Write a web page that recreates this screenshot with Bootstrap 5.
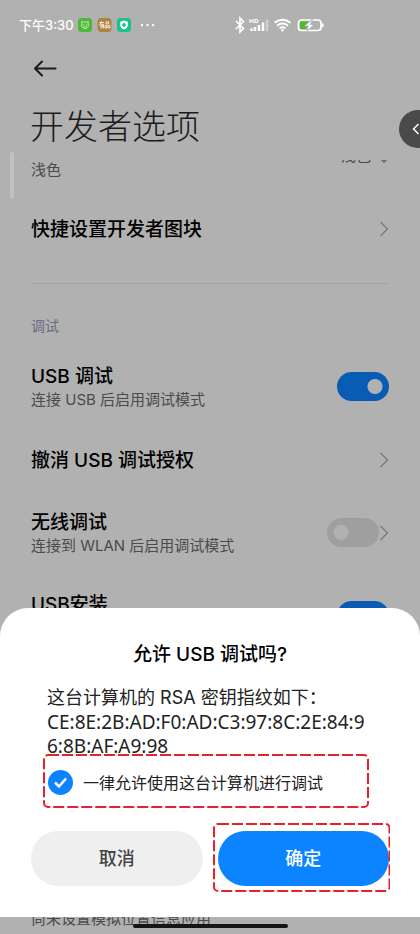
<!DOCTYPE html>
<html lang="zh-CN">
<head>
<meta charset="utf-8">
<meta name="viewport" content="width=device-width, initial-scale=1">
<title>开发者选项</title>
<link href="https://cdn.jsdelivr.net/npm/bootstrap@5.3.0/dist/css/bootstrap.min.css" rel="stylesheet">
<style>
  body { background: #b1b1b1; color: #000; font-family: Inter, "Noto Sans CJK SC", sans-serif; }
  .screen { isolation: isolate; }
  .status-bar { height: 50px; padding: 0 19px; color: #fff; font-size: 13px; font-weight: 500; line-height: 20px; }
  .status-bar svg, .icon { display: block; flex: none; }
  .status-left { width: 215px; gap: 5px; }
  .status-left span { margin-right: -1px; }
  .back-btn { width: 28px; height: 20px; margin: 8px 0 0 31px; }
  .page-title { margin: 24px 30px 0; font-size: 34px; font-weight: 300; line-height: 50px; color: #1c1c1c; padding-bottom: 8px; }
  .settings { padding: 0 31px; }
  .row-item { min-height: 73px; }
  .row-tall { min-height: 92px; }
  .row-title { padding-top: 2px; font-size: 19px; font-weight: 500; line-height: 24px; }
  .row-note { font-size: 15px; line-height: 22px; color: #4b4b4b; }
  .theme-row { height: 32px; line-height: 20px; }
  .theme-value { margin-top: -14px; }
  .divider { margin-top: 18px; border-top: 1px solid #a4a4a4; }
  .section-name { margin: 31px 0 13px; font-size: 14px; font-weight: 400; line-height: 22px; color: #6a6c82; }
  .toggle.form-check-input { width: 52px; height: 29px; margin: 0; border: 0; border-radius: 15px; background: #9f9f9f radial-gradient(circle at 14px 50%, #b1b1b1 7px, transparent 8px); }
  .toggle.form-check-input:checked { background: #085cb3 radial-gradient(circle at 38px 50%, #b1b1b1 7px, transparent 8px); }
  .scroll-thumb { left: 10px; top: 152px; width: 4px; height: 47px; border-radius: 2px; background: #c2c2c2; }
  .edge-handle { right: -17px; top: 110px; width: 38px; height: 38px; background: #4a4a4a; padding: 0 0 0 13px; }
  .sheet { left: 0; right: 0; bottom: 17px; padding: 32px 31px 31px; background: #fff; border-radius: 28px 28px 0 0; }
  .sheet-title { margin: 0 0 16px; font-size: 19px; font-weight: 500; line-height: 30px; }
  .sheet-text { margin: 0 16px; font-size: 18px; line-height: 24px; color: #222; }
  .fingerprint { font-family: "Noto Sans", sans-serif; font-size: 19px; overflow-wrap: anywhere; }
  .always { margin: -4px 20px 0 12px; padding: 2px 5px 0; height: 54px; font-size: 16px; color: #222; }
  .round-check.form-check-input { width: 25px; height: 25px; margin: 0; border: 0; border-radius: 50%; background-color: #ddd; }
  .round-check.form-check-input:checked { background: #0d84ff; }
  .tick { left: 5px; top: 16px; pointer-events: none; }
  .always label { padding: 2px 0 0 10px; }
  .actions { margin-top: 23px; gap: 15px; }
  .pill { height: 55px; border: 0; border-radius: 28px; font-size: 18px; }
  .pill-cancel, .pill-cancel:hover { background: #efefef; color: #454545; font-weight: 500; }
  .pill-ok, .pill-ok:hover { background: #0d84ff; color: #fff; font-weight: 500; }
  .outline { fill: none; stroke: #e8202c; stroke-width: 2; stroke-dasharray: 11 3; pointer-events: none; }
  .outline rect { x: 1px; y: 1px; width: calc(100% - 2px); height: calc(100% - 2px); rx: 4px; }
  .outline-row { inset: 0; }
  .outline-ok { left: -5px; top: -8px; width: calc(100% + 6px); height: calc(100% + 14px); }
  .home-bar { left: 0; right: 0; bottom: 6px; width: 155px; height: 4px; border-radius: 2px; background: #161616; }
</style>
<script src="https://cdn.jsdelivr.net/npm/bootstrap@5.3.0/dist/js/bootstrap.bundle.min.js"></script>
</head>
<body>
<div class="screen position-relative min-vh-100 d-flex flex-column overflow-hidden">

  <div class="status-bar d-flex align-items-center">
    <div class="status-left d-flex align-items-center">
      <span>下午3:30</span>
      <svg width="14" height="14" viewBox="0 0 14 14"><rect width="14" height="14" rx="3.5" fill="#4fb83a"/><path d="M4 5 3.8 3.3 5.4 4.2Q7 3.7 8.6 4.2L10.2 3.3 10 5Q10.8 6.3 10.2 8.300 9.300 10.500 7 10.500 4.700 10.500 3.800 8.300 3.200 6.300 4 5ZM4.600 6.800h1.600M7.800 6.800h1.600M5.500 8.300q.8 1 1.500 0 .7 1 1.500 0" fill="none" stroke="#d9f2d2" stroke-width=".8"/></svg>
      <svg width="15" height="14" viewBox="0 0 15 14"><rect width="14" height="14" x=".5" rx="3.5" fill="#ad843f"/><path d="M2.500 4.500h4.500M4.600 3 2.500 7.500M4 6.200h2.600V10.500M4 6.200V10.500M4 7.600h2.600M4 9h2.600M9 3.800h2.600v2.200H9ZM8 7.600h1.900v2.400H8ZM11 7.600h1.900v2.400H11Z" fill="none" stroke="#fff" stroke-width=".8"/></svg>
      <svg width="14" height="14" viewBox="0 0 14 14"><rect width="14" height="14" rx="3.5" fill="#18c48d"/><path d="M7 2.500 10.800 3.800V8Q10.500 10.300 7 11.600 3.500 10.300 3.200 8V3.800Z" fill="#fff"/><path d="M7 5v4M5 7h4" stroke="#18c48d" stroke-width="1.700"/></svg>
      <svg class="ms-1" width="22" height="14" viewBox="0 0 22 14" fill="#fff"><circle cx="2" cy="7" r="1.200"/><circle cx="7.500" cy="7" r="1.200"/><circle cx="13" cy="7" r="1.200"/></svg>
    </div>
    <svg width="92" height="20" viewBox="0 0 92 20" fill="none" stroke="#fff">
      <path d="M2 6 9.500 13.500 6 17V3l3.500 3.500L2 14" stroke-width="1.700"/>
      <path d="M16 4v4M19 4v4M16 6H19M21 4.500V7.500H22.300Q24 7.500 24 6T22.300 4.500H21Z" stroke-width="1.100"/>
      <path d="M17.500 13.500V16M21 12V16M25 10V16M29 7.500V16" stroke-width="2.500"/><path d="M33 4.500V16" stroke-width="2.500" opacity=".4"/>
      <path d="M40.500 7.800Q48.500 1.500 56.500 7.800M43 10.700Q48.500 6.300 54 10.700M45.500 13.300Q48.500 11 51.500 13.300" stroke-width="1.900"/><circle cx="48.500" cy="15.300" r="1.300" fill="#fff" stroke="none"/>
      <rect x="64.500" y="5" width="22.500" height="10.500" rx="3" stroke-width="1.700"/><path d="M88.800 8.500v3.500" stroke-width="1.600"/><path d="M66 6.400h9l-3 7.700h-6Z" fill="#4dbb2c" stroke="none"/><path d="M78.500 4 70.500 11h3.800L72.800 16.500 80 9.500h-3.600Z" fill="#fff" stroke="#b1b1b1" stroke-width=".9"/>
    </svg>
  </div>

  <button type="button" class="back-btn btn p-0 border-0" aria-label="返回">
    <svg class="icon" width="28" height="20" viewBox="0 0 28 20" fill="none" stroke="#1c1c1c" stroke-width="2" stroke-linecap="round" stroke-linejoin="round"><path d="M24.500 10.500H4M11 3.500 4 10.500l7 7"/></svg>
  </button>
  <h1 class="page-title">开发者选项</h1>

  <main class="settings flex-grow-1 d-flex flex-column overflow-hidden">
    <div class="row-note theme-row d-flex justify-content-between align-items-start">
      <span>浅色</span>
      <span class="theme-value d-flex align-items-center gap-2">浅色
        <svg class="icon" width="10" height="18" viewBox="0 0 10 18" fill="none" stroke="#606060" stroke-width="1.500"><path d="M2 7 5 4l3 3M2 12l3 3 3-3"/></svg></span>
    </div>
    <a href="#tiles" class="row-item d-flex align-items-center justify-content-between text-reset text-decoration-none">
      <span class="row-title">快捷设置开发者图块</span>
      <svg class="icon" width="10" height="16" viewBox="0 0 10 16" fill="none" stroke="#777" stroke-width="1.200"><path d="M1.500 1 8.500 8l-7 7"/></svg>
    </a>
    <div class="divider"></div>
    <h2 class="section-name">调试</h2>
    <div class="row-item d-flex align-items-center justify-content-between">
      <label for="usb"><span class="row-title d-block">USB 调试</span><span class="row-note d-block">连接 USB 后启用调试模式</span></label>
      <input id="usb" class="toggle form-check-input" type="checkbox" role="switch" checked>
    </div>
    <a href="#revoke" class="row-item d-flex align-items-center justify-content-between text-reset text-decoration-none">
      <span class="row-title">撤消 USB 调试授权</span>
      <svg class="icon" width="10" height="16" viewBox="0 0 10 16" fill="none" stroke="#777" stroke-width="1.200"><path d="M1.500 1 8.500 8l-7 7"/></svg>
    </a>
    <div class="row-item d-flex align-items-center">
      <label class="flex-grow-1" for="wireless"><span class="row-title d-block">无线调试</span><span class="row-note d-block">连接到 WLAN 后启用调试模式</span></label>
      <input id="wireless" class="toggle form-check-input" type="checkbox" role="switch">
      <svg class="icon" width="10" height="16" viewBox="0 0 10 16" fill="none" stroke="#777" stroke-width="1.200"><path d="M1.500 1 8.500 8l-7 7"/></svg>
    </div>
    <div class="row-tall d-flex align-items-center justify-content-between">
      <label for="install"><span class="row-title d-block">USB安装</span><span class="row-note d-block">允许通过USB安装应用</span></label>
      <input id="install" class="toggle form-check-input" type="checkbox" role="switch" checked>
    </div>
    <div class="row-note mt-auto">尚未设置模拟位置信息应用</div>
    <div class="pb-1"></div>
  </main>

  <div class="scroll-thumb position-absolute"></div>
  <button type="button" class="edge-handle position-absolute btn rounded-circle border-0" aria-label="展开侧边栏">
    <svg class="icon" width="8" height="12" viewBox="0 0 8 12" fill="none" stroke="#fff" stroke-width="1.500"><path d="M6.500 1 1.500 6l5 5"/></svg>
  </button>

  <section class="sheet position-absolute" role="dialog" aria-labelledby="ask">
    <h2 id="ask" class="sheet-title text-center">允许 USB 调试吗?</h2>
    <div class="sheet-text">
      <div>这台计算机的 RSA 密钥指纹如下：</div>
      <div class="fingerprint">CE:8E:2B:AD:F0:AD:C3:97:8C:2E:84:96:8B:AF:A9:98</div>
    </div>
    <div class="always position-relative d-flex align-items-center">
      <input id="always" class="round-check form-check-input flex-shrink-0" type="checkbox" checked>
      <svg class="tick position-absolute" width="25" height="25" viewBox="0 0 25 25" fill="none" stroke="#fff" stroke-width="2.500"><path d="m7 12.500 4 4 7-8"/></svg>
      <label for="always">一律允许使用这台计算机进行调试</label>
      <svg class="outline outline-row position-absolute w-100 h-100"><rect/></svg>
    </div>
    <div class="actions d-flex">
      <div class="flex-fill w-50"><button type="button" class="pill pill-cancel btn w-100">取消</button></div>
      <div class="flex-fill w-50 position-relative"><button type="button" class="pill pill-ok btn w-100">确定</button>
        <svg class="outline outline-ok position-absolute"><rect/></svg></div>
    </div>
  </section>
  <div class="home-bar position-absolute mx-auto"></div>
</div>
</body>
</html>
